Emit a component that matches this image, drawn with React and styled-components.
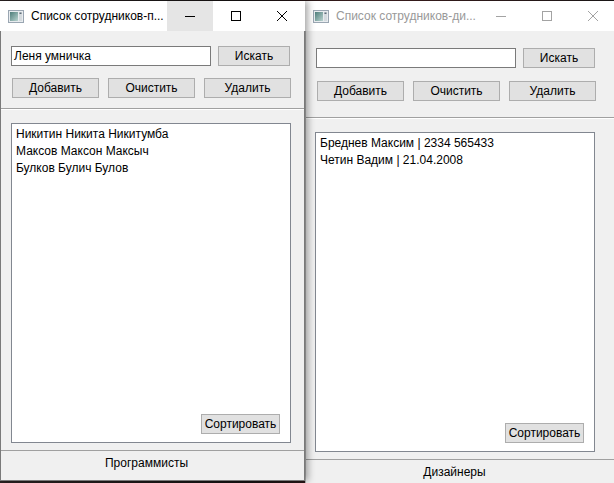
import React from "react";
import styled, {createGlobalStyle} from "styled-components";

const GlobalStyle = createGlobalStyle`
    html, body {
        margin: 0;
        padding: 0;
        background: #1d1818;
    }
    body {
        font-family: "Liberation Sans", Arial, sans-serif;
        font-size: 12px;
        color: #000;
    }
`

const windows = [
    {
        key: 'dev',
        left: 0,
        top: 1,
        width: 305,
        active: true,
        title: 'Список сотрудников-п...',
        query: 'Леня умничка',
        items: ['Никитин Никита Никитумба', 'Максов Максон Максыч', 'Булков Булич Булов'],
        tab: 'Программисты',
        pad: {top: 15, gap: 12, bottom: 10},
    },
    {
        key: 'design',
        left: 305,
        top: 1,
        width: 311,
        active: false,
        title: 'Список сотрудников-ди...',
        query: '',
        items: ['Бреднев Максим | 2334 565433', 'Четин Вадим | 21.04.2008'],
        tab: 'Дизайнеры',
        pad: {top: 17, gap: 13, bottom: 16},
    },
]

function AppIcon() {
    return (
        <svg width="16" height="16" viewBox="0 0 16 16">
            <defs>
                <linearGradient id="ico" x1="0" y1="0" x2="1" y2="1">
                    <stop offset="0" stopColor="#4d7d7a"/>
                    <stop offset="1" stopColor="#b9d3cf"/>
                </linearGradient>
            </defs>
            <rect x="0.5" y="2.5" width="15" height="12" fill="#e8ecef" stroke="#9aa6b2"/>
            <rect x="2" y="4" width="8" height="9" fill="url(#ico)"/>
            <rect x="11" y="4" width="3" height="9" fill="#d4dade"/>
            <rect x="11.5" y="4.5" width="2" height="1.5" fill="#5d6c78"/>
        </svg>
    )
}

function Caption({kind, color}) {
    if (kind === 'min') {
        return <svg width="10" height="10"><path d="M0 5.5h10" stroke={color}/></svg>
    }
    if (kind === 'max') {
        return <svg width="10" height="10"><rect x="0.5" y="0.5" width="9" height="9" fill="none" stroke={color}/></svg>
    }
    return <svg width="10" height="10"><path d="M0 0L10 10M10 0L0 10" stroke={color}/></svg>
}

function EmployeeWindow({ w }) {
    const iconColor = w.active ? '#000' : '#a3a3a3'
    return (
        <Win $left={w.left} $top={w.top} $width={w.width} $active={w.active}>
            <TitleBar>
                <IconSlot><AppIcon /></IconSlot>
                <Title $active={w.active}>{w.title}</Title>
                <CaptionBtn $hover={w.active}><Caption kind={'min'} color={iconColor}/></CaptionBtn>
                <CaptionBtn><Caption kind={'max'} color={iconColor}/></CaptionBtn>
                <CaptionBtn><Caption kind={'close'} color={iconColor}/></CaptionBtn>
            </TitleBar>
            <TopPanel $pad={w.pad}>
                <SearchRow>
                    <LineEdit>{w.query}</LineEdit>
                    <Button>Искать</Button>
                </SearchRow>
                <ButtonRow>
                    <Button>Добавить</Button>
                    <Button>Очистить</Button>
                    <Button>Удалить</Button>
                </ButtonRow>
            </TopPanel>
            <ListPanel $shift={w.active ? 0 : -1}>
                <ListBox>
                    {w.items.map(item => <Item key={item}>{item}</Item>)}
                    <SortRow>
                        <SortButton>Сортировать</SortButton>
                    </SortRow>
                </ListBox>
            </ListPanel>
            <TabBar>{w.tab}</TabBar>
        </Win>
    )
}

export default function App() {
    return (
        <>
            <GlobalStyle />
            <Desktop>
                {[...windows].reverse().map(w => <EmployeeWindow key={w.key} w={w} />)}
            </Desktop>
        </>
    )
}

const Desktop = styled.div`
    position: relative;
    width: 614px;
    height: 483px;
    overflow: hidden;
    background: linear-gradient(90deg, #2a2222 0%, #161313 40%, #3a1b1b 60%, #1a1616 100%);
`

const Win = styled.div`
    position: absolute;
    left: ${p => p.$left}px;
    top: ${p => p.$top}px;
    width: ${p => p.$width}px;
    box-sizing: border-box;
    display: flex;
    flex-direction: column;
    background: #f0f0f0;
    border: 1px solid ${p => p.$active ? '#7a7a7a' : '#b5b5b5'};
    border-top: none;
    box-shadow: ${p => p.$active ? '3px 0 7px rgba(0,0,0,0.35)' : 'none'};
    z-index: ${p => p.$active ? 2 : 1};
`

const TitleBar = styled.div`
    height: 30px;
    display: flex;
    align-items: center;
    background: #fff;
    margin: 0 -1px 0 -1px;
`

const IconSlot = styled.div`
    width: 16px;
    height: 16px;
    margin: 0 7px 0 8px;
    display: flex;
`

const Title = styled.div`
    flex: 1;
    white-space: nowrap;
    overflow: hidden;
    color: ${p => p.$active ? '#000' : '#999'};
`

const CaptionBtn = styled.div`
    width: 46px;
    height: 30px;
    display: flex;
    align-items: center;
    justify-content: center;
    background: ${p => p.$hover ? '#e5e5e5' : 'transparent'};
`

const TopPanel = styled.div`
    display: flex;
    flex-direction: column;
    gap: ${p => p.$pad.gap}px;
    padding: ${p => p.$pad.top}px 0 ${p => p.$pad.bottom}px 10px;
    border-bottom: 1px solid #a0a0a0;
`

const SearchRow = styled.div`
    display: grid;
    grid-template-columns: 200px 72px;
    gap: 7px;
`

const ButtonRow = styled.div`
    display: grid;
    grid-template-columns: repeat(3, 87px);
    gap: 9px;
    padding-left: 1px;
`

const LineEdit = styled.div`
    height: 20px;
    box-sizing: border-box;
    background: #fff;
    border: 1px solid #7a7a7a;
    padding: 0 2px;
    line-height: 18px;
    white-space: nowrap;
`

const Button = styled.div`
    height: 20px;
    box-sizing: border-box;
    background: #e1e1e1;
    border: 1px solid #adadad;
    display: flex;
    align-items: center;
    justify-content: center;
    white-space: nowrap;
`

const ListPanel = styled.div`
    padding: 13px 0 7px ${p => 10 + p.$shift}px;
    border-top: 1px solid #fff;
`

const ListBox = styled.div`
    width: 280px;
    height: 320px;
    box-sizing: border-box;
    background: #fff;
    border: 1px solid #828790;
    padding: 2px 10px 8px 4px;
    display: flex;
    flex-direction: column;
`

const Item = styled.div`
    line-height: 17px;
    white-space: nowrap;
`

const SortRow = styled.div`
    margin-top: auto;
    display: flex;
    justify-content: flex-end;
`

const SortButton = styled(Button)`
    width: 79px;
`

const TabBar = styled.div`
    height: 30px;
    box-sizing: border-box;
    border-top: 1px solid #a0a0a0;
    padding: 4px 12px 0 0;
    line-height: 17px;
    text-align: center;
`
